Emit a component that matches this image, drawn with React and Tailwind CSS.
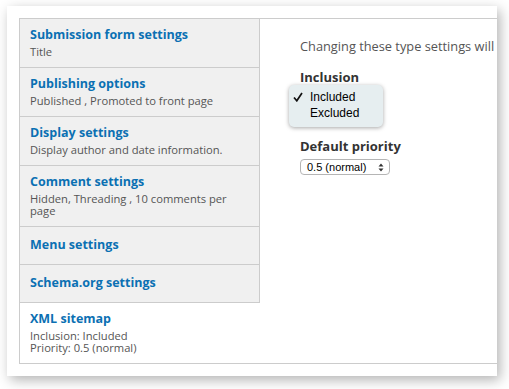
import React from 'react';

const tabs = [
  { title: 'Submission form settings', summary: ['Title'] },
  { title: 'Publishing options', summary: ['Published , Promoted to front page'] },
  { title: 'Display settings', summary: ['Display author and date information.'] },
  { title: 'Comment settings', summary: ['Hidden, Threading , 10 comments per', 'page'] },
  { title: 'Menu settings', summary: [] },
  { title: 'Schema.org settings', summary: [] },
  { title: 'XML sitemap', summary: ['Inclusion: Included', 'Priority: 0.5 (normal)'], selected: true },
];

const Tab = ({ title, summary, selected }) => {
  const pad = summary.length ? 'pt-[8px] pb-[9px]' : 'pt-[10px] pb-[11px]';
  return (
    <div
      className={
        selected
          ? `bg-white pl-[10px] pr-2 ${pad}`
          : `bg-[#f0f0f0] border-b border-r border-[#cccccc] pl-[10px] pr-2 ${pad}`
      }
    >
      <div className="text-[12.5px] leading-[16px] font-bold text-[#0b70b3]">{title}</div>
      {summary.length > 0 && (
        <div className="mt-[3px] text-[11.2px] leading-[12px] text-[#555]">
          {summary.map((line, i) => (
            <div key={i}>{line}</div>
          ))}
        </div>
      )}
    </div>
  );
};

export default function App() {
  return (
    <div className="w-[509px] h-[389px] bg-white overflow-hidden pt-[6px] pl-[7px]" style={{ fontFamily: '"Open Sans", sans-serif' }}>
      <div className="w-[490px] h-[370px] bg-white overflow-hidden shadow-[3px_4px_12px_rgba(0,0,0,0.3)] pt-[12px] pl-[12px]">
        <div className="flex w-[520px] h-[346px] border border-[#cccccc]">
          <div className="w-[240px] shrink-0 flex flex-col">
            {tabs.map((t) => (
              <Tab key={t.title} {...t} />
            ))}
          </div>
          <div className="flex-1 pl-[40px] pt-[19px] text-[#555]">
            <p className="text-[12.8px] leading-[16px] whitespace-nowrap">Changing these type settings will</p>
            <div className="mt-[15px] text-[13px] leading-[16px] font-bold text-[#333]">Inclusion</div>
            <div className="relative h-[53px]">
              <div
                className="absolute left-[-11px] top-0 w-[94px] rounded-[5px] bg-[#e6eef0] shadow-[0_1px_4px_rgba(0,0,0,0.35)] pt-[4px] pb-[6px] text-[12px] leading-[16px] text-black"
                style={{ fontFamily: '"Liberation Sans", Arial, sans-serif' }}
              >
                <div className="flex items-center">
                  <span className="w-[21px] pl-[4px] flex items-center">
                    <svg width="10" height="10" viewBox="0 0 10 10">
                      <path d="M1 5.5 L3.8 8.8 L9 1" fill="none" stroke="#111" strokeWidth="1.7" />
                    </svg>
                  </span>
                  <span>Included</span>
                </div>
                <div className="flex items-center">
                  <span className="w-[21px]" />
                  <span>Excluded</span>
                </div>
              </div>
            </div>
            <div className="text-[13px] leading-[16px] font-bold text-[#333]">Default priority</div>
            <div
              className="mt-[5px] w-[90px] h-[16px] flex items-center justify-between rounded-[4px] border border-[#b5b5b5] bg-white pl-[6px] pr-[5px] text-[11px] text-black"
              style={{ fontFamily: '"Liberation Sans", Arial, sans-serif' }}
            >
              <span>0.5 (normal)</span>
              <svg width="6" height="9" viewBox="0 0 6 9">
                <path d="M0.5 3.5 L3 0.5 L5.5 3.5 Z M0.5 5.5 L3 8.5 L5.5 5.5 Z" fill="#333" />
              </svg>
            </div>
          </div>
        </div>
      </div>
    </div>
  );
}
